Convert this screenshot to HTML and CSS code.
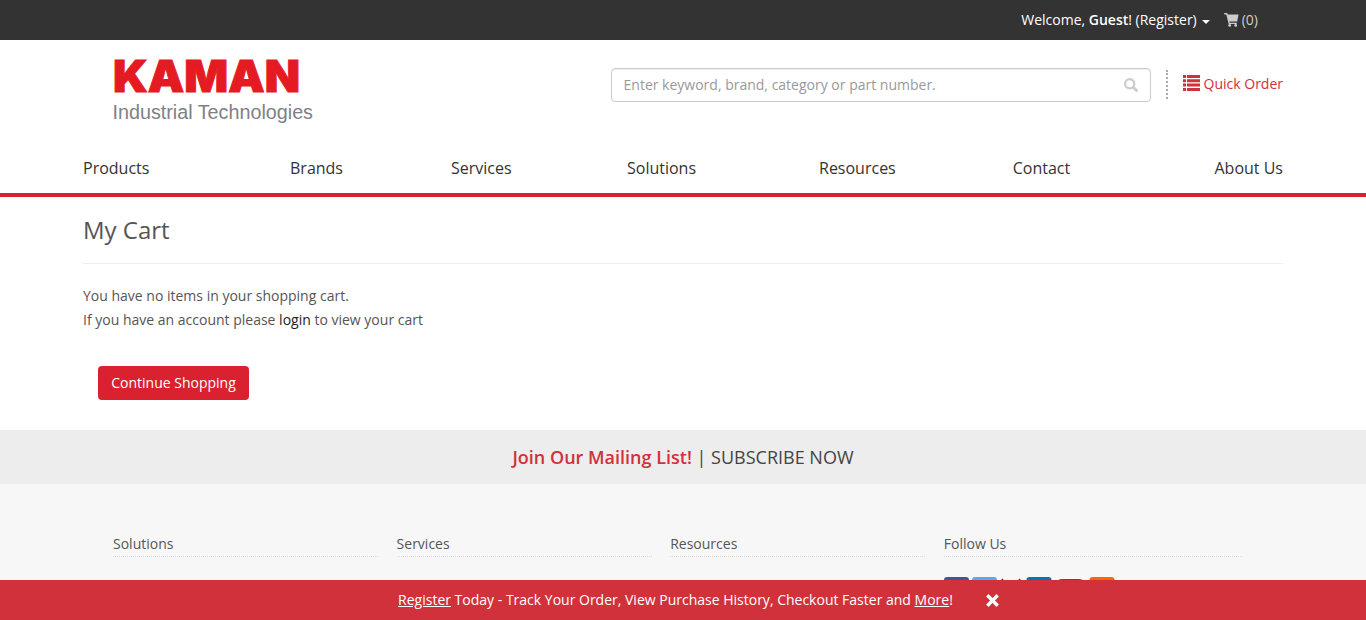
FILE: index.html
```html
<!DOCTYPE html>
<html lang="en">
<head>
<meta charset="utf-8">
<title>My Cart</title>
<link rel="stylesheet" href="styles.css">
</head>
<body>
<div class="topbar">
  <a class="welcome">Welcome, <b>Guest</b>! (Register)<span class="caret"></span></a>
  <a class="cart"><svg width="15" height="14" viewBox="0 0 15 14"><path d="M0 .8Q0 0 .8 0h2.400l.5 1.500H14.500L13.200 8.400H5.400l.3 1.300h7.100v1.200H4.700L2.300 1.500H.8Q0 1.500 0 .8z" fill="currentColor"/><circle cx="5.700" cy="12.400" r="1.400" fill="currentColor"/><circle cx="11.700" cy="12.400" r="1.400" fill="currentColor"/></svg><span>(0)</span></a>
</div>
<header class="header">
  <div class="brand">
    <svg class="logo" width="202" height="72" viewBox="0 0 202 72">
      <text class="logo-name" x="-1" y="37" textLength="187" lengthAdjust="spacingAndGlyphs">KAMAN</text>
      <text class="logo-sub" x="-1.500" y="64" textLength="200.500" lengthAdjust="spacingAndGlyphs">Industrial Technologies</text>
    </svg>
    <div class="search"><span>Enter keyword, brand, category or part number.</span>
      <svg width="14" height="14" viewBox="0 0 14 14"><circle cx="5.700" cy="5.700" r="4.600" fill="none" stroke="#ccc" stroke-width="2.200"/><path d="M9.400 9.400L12.600 12.600" stroke="#ccc" stroke-width="2.800" stroke-linecap="round"/></svg>
    </div>
    <div class="divider"></div>
    <a class="quick"><svg width="17" height="16" viewBox="0 0 17 16"><path d="M0 0h3v3H0zM4 0h13v3H4zM0 4.300h3v3H0zM4 4.300h13v3H4zM0 8.600h3v3H0zM4 8.600h13v3H4zM0 13h3v3H0zM4 13h13v3H4z" fill="currentColor"/></svg><span>Quick Order</span></a>
  </div>
  <nav class="nav"><a>Products</a><a>Brands</a><a>Services</a><a>Solutions</a><a>Resources</a><a>Contact</a><a>About Us</a></nav>
</header>
<main class="main">
  <h1 class="title">My Cart</h1>
  <p class="message">You have no items in your shopping cart.<br>If you have an account please <a>login</a> to view your cart</p>
  <button class="button">Continue Shopping</button>
</main>
<section class="mailing"><b>Join Our Mailing List!</b> | SUBSCRIBE NOW</section>
<footer class="footer">
  <div class="col">Solutions</div><div class="col">Services</div><div class="col">Resources</div><div class="col">Follow Us</div>
  <svg class="social" width="172" height="26" viewBox="0 0 172 26">
    <rect width="25" height="26" rx="3" fill="#3b5998"/>
    <rect x="28" width="25" height="26" rx="3" fill="#55acee"/>
    <path d="M58 2l8 18 10-18" fill="none" stroke="#6a3a9a" stroke-width="2"/>
    <rect x="82.500" width="25" height="26" rx="3" fill="#0077b5"/>
    <path d="M113 5q1-3 5-3h17q4 0 5 3v14h-27z" fill="#b5262b"/>
    <rect x="145.500" width="25" height="26" rx="3" fill="#ff6600"/>
  </svg>
</footer>
<div class="notice"><span><u>Register</u> Today - Track Your Order, View Purchase History, Checkout Faster and <u>More</u>!</span>
  <svg width="13" height="13" viewBox="0 0 13 13"><path d="M2.500 2.500l8 8M10.500 2.500l-8 8" stroke="#fff" stroke-width="3.400" stroke-linecap="square"/></svg>
</div>
</body>
</html>
```
FILE: styles.css
```css
* { box-sizing: border-box; }
html { overflow: hidden; }
body { margin: 0; height: 620px; overflow: hidden; background: #fff; color: #555; font: 14px/20px "Open Sans", sans-serif; }
svg { flex: none; display: block; }
.topbar { height: 40px; padding-right: 108px; background: #333; display: flex; justify-content: flex-end; align-items: center; gap: 14px; color: #fff; }
.welcome { display: flex; align-items: center; white-space: pre; }
.welcome b { font-weight: 600; }
.caret { margin: 3px 0 0 5px; border: 4px solid transparent; border-top-color: #fff; border-bottom: 0; }
.cart { display: flex; align-items: center; gap: 3px; color: #ccc; }
.header { height: 157px; border-bottom: 4px solid #d9212f; }
.brand { height: 103px; padding: 15px 83px 0 114px; display: flex; align-items: flex-start; }
.logo { overflow: visible; }
.logo-name { font: 900 44px Inter, sans-serif; fill: #e51b23; stroke: #e51b23; stroke-width: 1; }
.logo-sub { font: 20px "Liberation Sans", sans-serif; fill: #808184; }
.search { width: 540px; height: 34px; margin: 13px 15px 0 auto; padding: 0 12px; border: 1px solid #ccc; border-radius: 4px; box-shadow: inset 0 1px 1px rgba(0,0,0,.075); display: flex; align-items: center; justify-content: space-between; color: #999; }
.divider { width: 2px; height: 29px; margin: 15px 15px 0 0; border-left: 2px dotted #aaa; }
.quick { margin-top: 19px; display: flex; align-items: center; gap: 4px; color: #d0313a; }
.quick svg { margin-bottom: 2px; }
.nav { padding: 14px 83px 0; font-size: 16px; line-height: 22px; color: #333; display: grid; grid-template-columns: 207px 161px 176px 192px 193.700px 1fr auto; }
.main { height: 233px; padding: 0 83px; }
.title { height: 67px; margin: 0 0 20px; padding-top: 18px; border-bottom: 1px solid #eee; font-size: 24px; line-height: 30px; font-weight: 400; }
.message { margin: 0 0 34px; line-height: 24px; }
.message a { color: #222; }
.button { display: block; width: 151px; height: 34px; margin-left: 15px; padding: 0; border: 0; border-radius: 4px; background: #d9212f; color: #fff; font: inherit; }
.mailing { height: 54px; background: #ededed; color: #444; font-size: 18px; line-height: 54px; text-align: center; }
.mailing b { font-weight: 600; color: #d0313a; }
.footer { height: 136px; padding: 50px 123px 0 113px; background: #f7f7f7; display: grid; grid-template-columns: 265px 255px 255px 299px; grid-template-rows: 23px 26px; column-gap: 18.600px; row-gap: 20px; }
.col { border-bottom: 1px dotted #dcdcdc; }
.social { grid-column: 4; }
.notice { position: fixed; inset: auto 0 0; height: 40px; padding-left: 31px; background: #d0313a; color: #fff; display: flex; align-items: center; justify-content: center; gap: 33px; }
```
